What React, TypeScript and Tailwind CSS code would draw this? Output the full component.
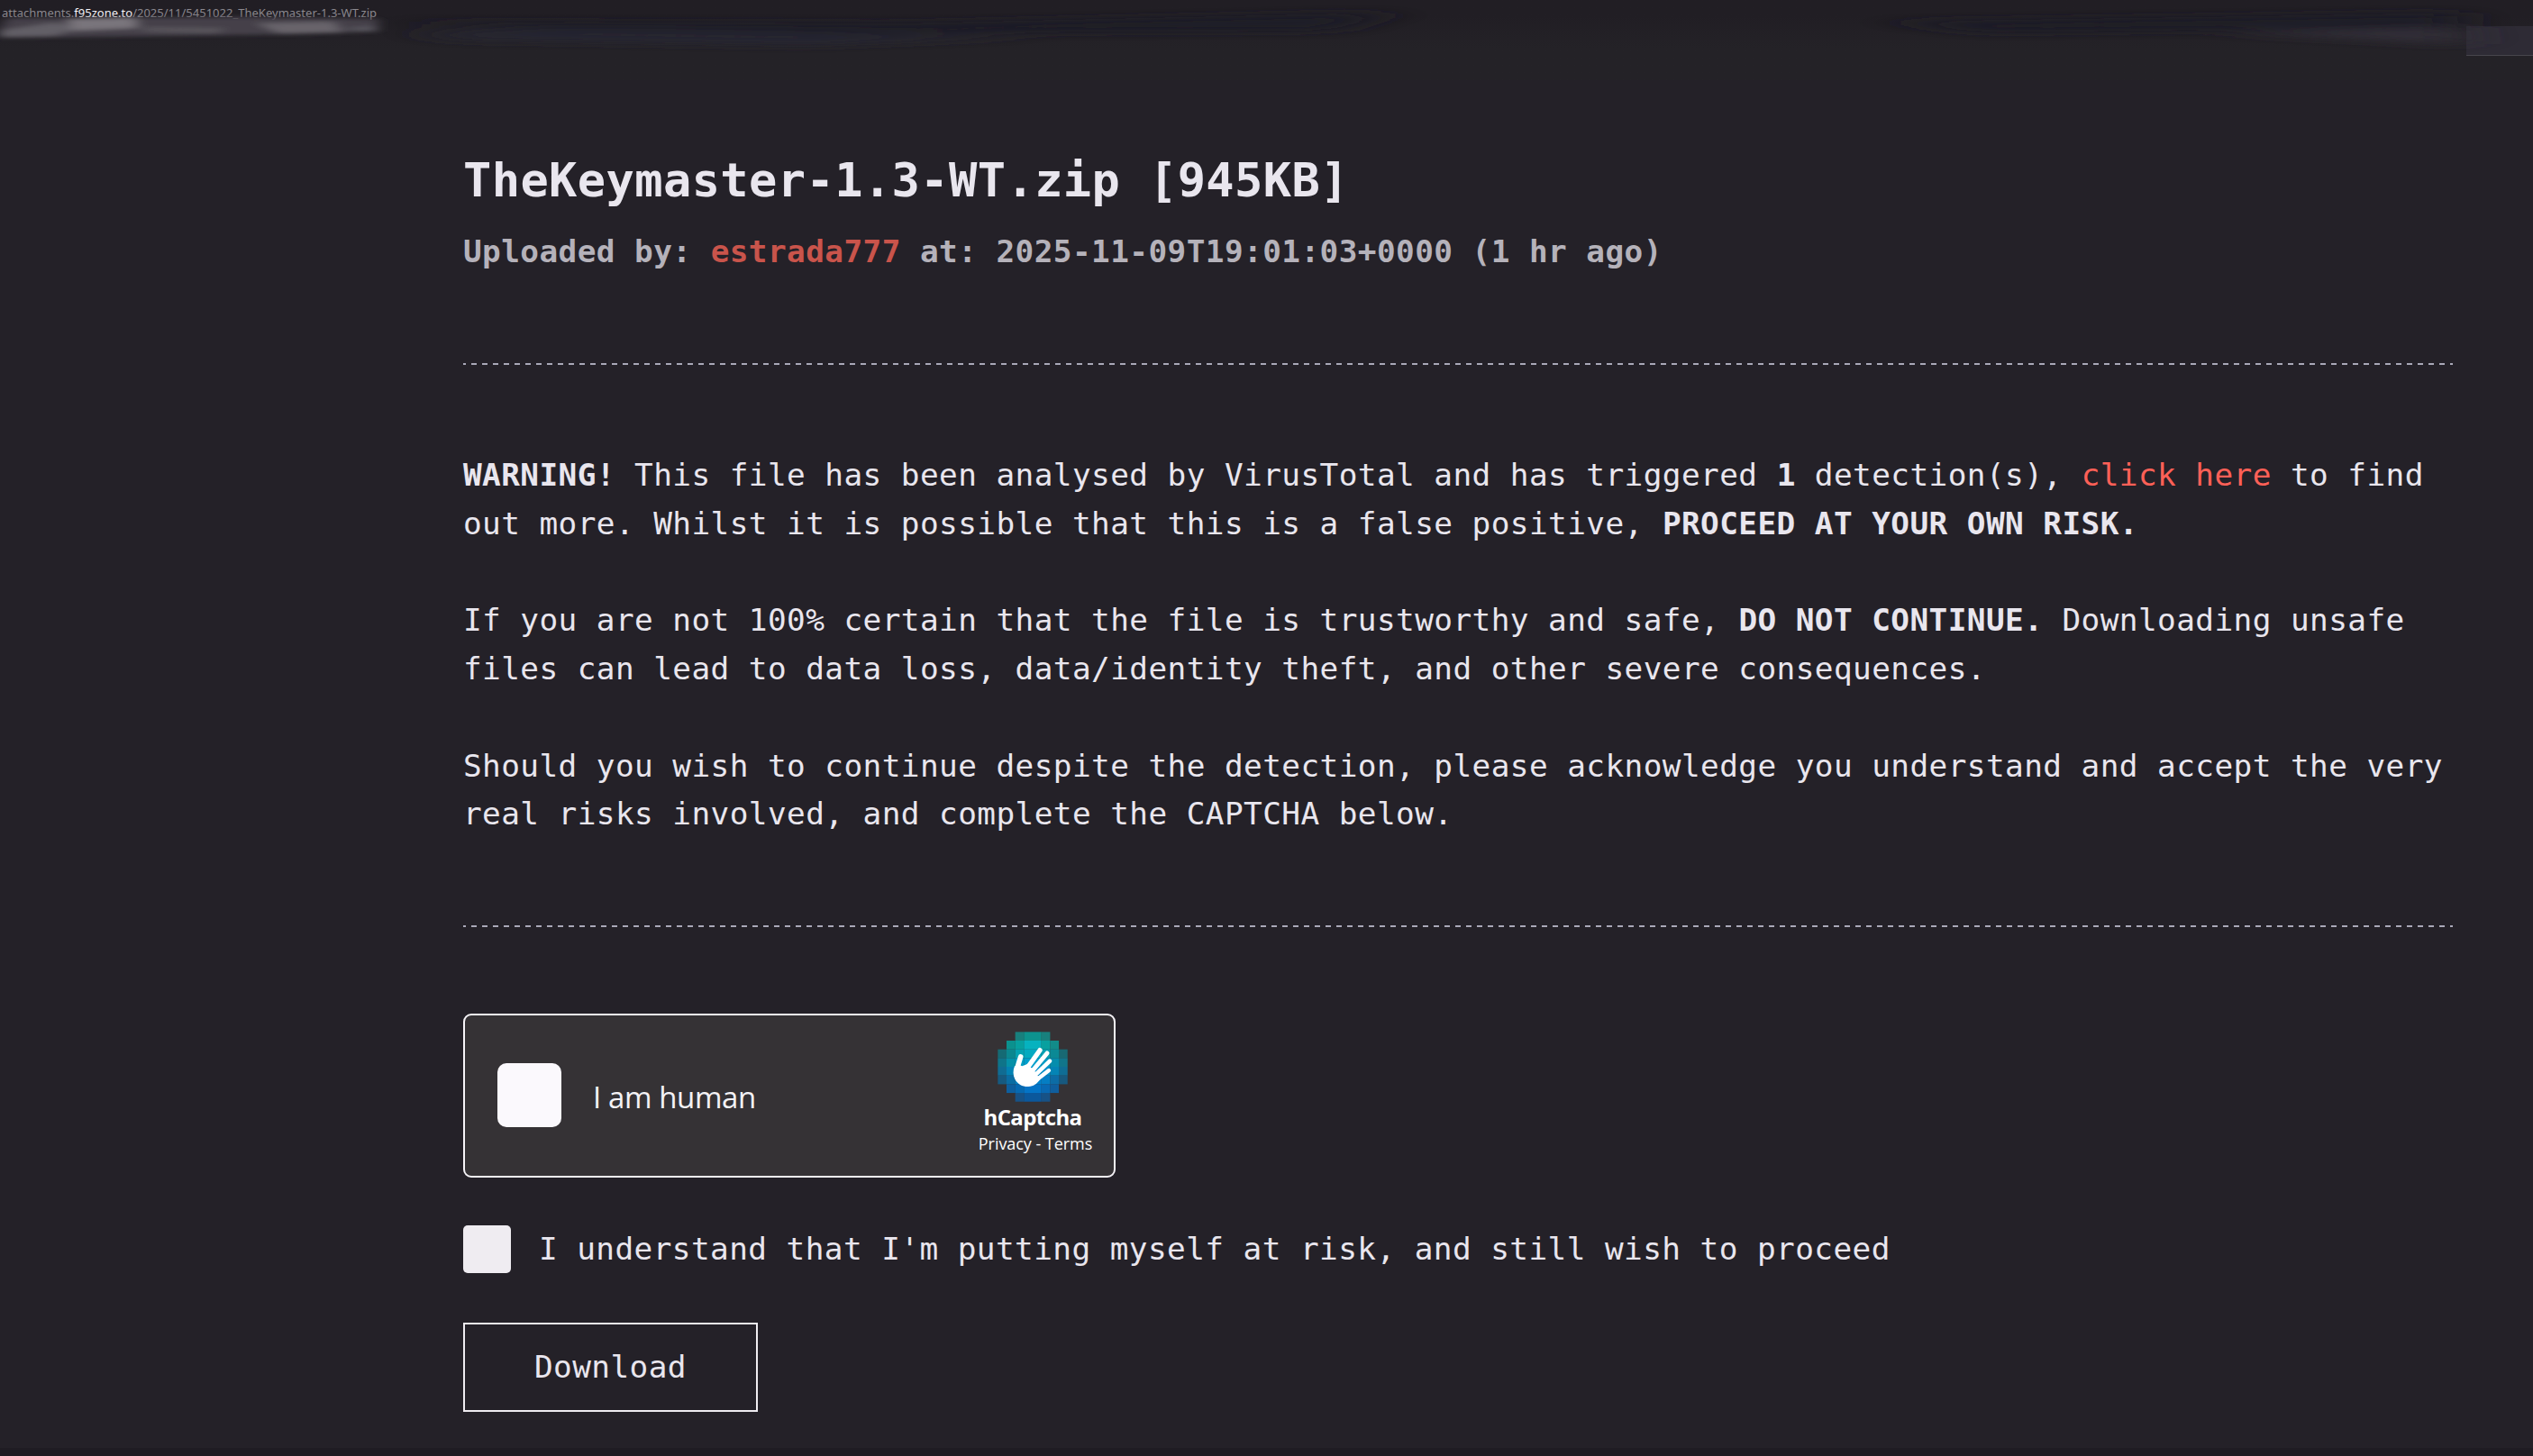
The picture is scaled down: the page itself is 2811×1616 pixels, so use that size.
import type { ReactNode } from "react";

// 8x8 mosaic behind the hand, empty string = no tile
const tiles = [
  ["", "", "#18807d", "#0d938e", "#0d938e", "#18807d", "", ""],
  ["", "#0b918e", "#07a09f", "#06b2bf", "#06b2bf", "#08a09f", "#128b89", ""],
  ["#156a74", "#0b8790", "#05a2b2", "#04aac0", "#04a9c4", "#05a0b2", "#0b8995", "#186973"],
  ["#0f7489", "#0590a8", "#009fc4", "#009fcb", "#009fcb", "#009ac3", "#058dad", "#11758b"],
  ["#106c93", "#0382b3", "#0090c8", "#0090cd", "#0090cd", "#008fc9", "#0484b5", "#0f6d95"],
  ["#165a80", "#0a6da3", "#0380c0", "#0083cc", "#0083cc", "#047ec4", "#0c6ca5", "#17597f"],
  ["", "#0d5f9e", "#0669b1", "#0474c6", "#0474c6", "#0869b3", "#0f5e9d", ""],
  ["", "", "#175286", "#0b589c", "#0b589c", "#175286", "", ""],
];

function HCaptchaLogo() {
  return (
    <svg className="mr-[6px] h-[84px] w-[84px]" viewBox="0 0 252 252">
      {tiles.map((row, y) =>
        row.map((fill, x) =>
          fill ? (
            <rect key={`${x}-${y}`} x={10 + x * 29} y={10 + y * 29} width="29.2" height="29.2" fill={fill} />
          ) : null,
        ),
      )}
      <g stroke="#fff" strokeLinecap="round" fill="none">
        <path d="M86 93 L74 132" strokeWidth="17" />
        <path d="M150 71 L104 136" strokeWidth="16" />
        <path d="M174 81 L124 141" strokeWidth="15" />
        <path d="M183 107 L136 152" strokeWidth="14" />
        <path d="M180 138 L144 166" strokeWidth="13" />
      </g>
      <path
        d="M66 124 C60 138 60 154 67 167 C76 184 93 193 112 192 C130 191 139 183 148 172 L154 163 L141 155 L142 146 L132 141 L129 133 L119 128 L110 116 L91 124 L82 120 Z"
        fill="#fff"
      />
    </svg>
  );
}

function TopBar() {
  return (
    <header className="relative h-[89px] overflow-hidden bg-gradient-to-b from-[#211e24] from-20% to-[#242227] to-60%">
      <div className="flex h-[29px] items-start pl-[2px] font-['Noto_Sans','Open_Sans',sans-serif] text-[13px] leading-[29px] tracking-[0.01px] text-[#8b888e]">
        <span className="whitespace-nowrap">
          attachments.<span className="text-[#f4f2f6]">f95zone.to</span>/2025/11/5451022_TheKeymaster-1.3-WT.zip
        </span>
      </div>
      <div className="ml-auto h-[33px] w-[74px] border-b border-[#47454c] bg-[#2e2b35]" />
      <svg className="absolute inset-0 h-full w-full" viewBox="0 0 2811 89" preserveAspectRatio="none">
        <defs>
          <filter id="soft" x="-20%" y="-100%" width="140%" height="300%">
            <feGaussianBlur stdDeviation="7 2" />
          </filter>
          <filter id="wide" x="-20%" y="-200%" width="140%" height="500%">
            <feGaussianBlur stdDeviation="30 5" />
          </filter>
        </defs>
        <g filter="url(#wide)">
          <path d="M440 24 L1000 26 L1540 14 L1480 34 L700 38 Z" fill="#1e1c27" />
          <path d="M470 36 C620 28 900 40 1150 40 L900 50 L500 44 Z" fill="#282631" />
          <path d="M2100 24 L2500 18 L2730 14 L2725 30 L2200 36 Z" fill="#1d1b26" />
          <path d="M2470 36 L2730 30 L2735 50 L2640 44 Z" fill="#302d39" />
        </g>
        <g filter="url(#soft)">
          <path d="M8 20 L278 19 L420 21 L418 35 L330 38 L180 40 L0 42 L0 32 Z" fill="#454148" />
          <path d="M0 34 L60 25 L90 30 L60 40 L0 41 Z" fill="#625f66" />
          <path d="M75 21 L150 19 L152 31 L80 34 Z" fill="#79747c" />
          <path d="M160 30 L250 31 L240 37 L160 35 Z" fill="#58545b" />
          <path d="M285 26 L370 24 L380 36 L310 37 Z" fill="#67636b" />
          <path d="M385 31 L416 29 L417 35 L390 34 Z" fill="#59565e" />
        </g>
      </svg>
    </header>
  );
}

function Divider() {
  return (
    <div className="h-[2px] bg-[repeating-linear-gradient(90deg,#a9a8b8_0_3px,transparent_3px_9px,#a9a8b8_9px_12px)]" />
  );
}

function Paragraph({ children }: { children: ReactNode }) {
  return <p className="mb-[53.76px] whitespace-nowrap last:mb-0">{children}</p>;
}

function Captcha() {
  return (
    <div className="flex h-[182px] w-[724px] rounded-[9px] border-2 border-[#f6f4f8] bg-[#353235] font-['Open_Sans','Noto_Sans',sans-serif]">
      <div className="mt-[53px] ml-[36px] h-[71px] w-[71px] rounded-[10px] bg-[#fbf9fd]" />
      <div className="mt-[64px] ml-[35px] text-[33px] leading-[54px] tracking-[-0.4px] whitespace-nowrap text-[#f4f2f6]">
        I am human
      </div>
      <div className="mt-[15px] mr-[20px] ml-auto flex w-[134px] flex-col items-center text-white">
        <HCaptchaLogo />
        <div className="mt-[-2px] mr-[6px] text-[24px] leading-[32px] font-bold tracking-[-0.6px]">hCaptcha</div>
        <div className="text-[18px] leading-[26px] tracking-[-0.05px] whitespace-nowrap">Privacy - Terms</div>
      </div>
    </div>
  );
}

export default function App() {
  return (
    <div className="flex h-[1616px] w-[2811px] flex-col overflow-hidden bg-[#242128] font-['DejaVu_Sans_Mono','Liberation_Mono',monospace] text-[34.4px] leading-[53.76px] tracking-[0.42px] text-[#e9e6ee]">
      <TopBar />
      <main className="ml-[514px] flex w-[2208px] grow flex-col pt-[71px]">
        <h1 className="text-[52px] leading-[80px] font-bold tracking-[0.4px] whitespace-nowrap">
          TheKeymaster-1.3-WT.zip [945KB]
        </h1>
        <h2 className="mt-[13px] h-[54px] font-bold whitespace-nowrap text-[#b5b2ba]">
          Uploaded by: <a className="text-[#c9544b]">estrada777</a> at: 2025-11-09T19:01:03+0000 (1 hr ago)
        </h2>
        <div className="mt-[96px]">
          <Divider />
        </div>

        <section className="mt-[96px] h-[431px]">
          <Paragraph>
            <b>WARNING!</b> This file has been analysed by VirusTotal and has triggered <b>1</b> detection(s),{" "}
            <a className="text-[#ff6057]">click here</a> to find
            <br />
            out more. Whilst it is possible that this is a false positive, <b>PROCEED AT YOUR OWN RISK.</b>
          </Paragraph>
          <Paragraph>
            If you are not 100% certain that the file is trustworthy and safe, <b>DO NOT CONTINUE.</b> Downloading unsafe
            <br />
            files can lead to data loss, data/identity theft, and other severe consequences.
          </Paragraph>
          <Paragraph>
            Should you wish to continue despite the detection, please acknowledge you understand and accept the very
            <br />
            real risks involved, and complete the CAPTCHA below.
          </Paragraph>
        </section>

        <div className="mt-[95px] mb-[96px]">
          <Divider />
        </div>

        <Captcha />

        <label className="mt-[53px] flex h-[53px] items-center">
          <span className="h-[53px] w-[53px] rounded-[5px] bg-[#efecf1]" />
          <span className="ml-[31px] whitespace-nowrap">
            I understand that I'm putting myself at risk, and still wish to proceed
          </span>
        </label>

        <button className="mt-[55px] flex h-[99px] w-[327px] items-center justify-center border-2 border-[#efecf1]">
          Download
        </button>
      </main>
      <footer className="h-[9px] bg-[#1f1c23]" />
    </div>
  );
}
